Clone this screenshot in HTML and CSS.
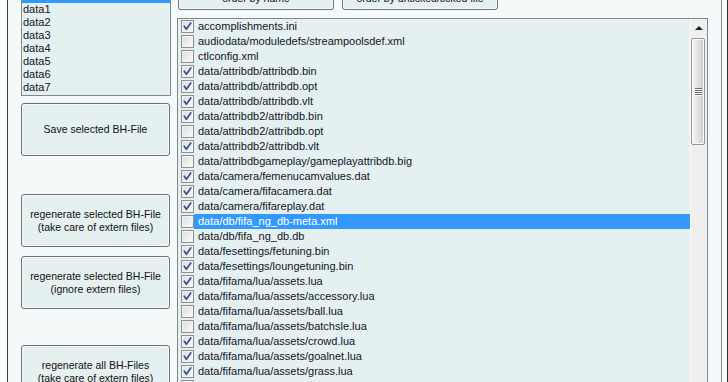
FILE: index.html
```html
<!DOCTYPE html>
<html lang="en">
<head>
  <meta charset="UTF-8">
  <title>BH-File Tool</title>
  <link rel="stylesheet" href="styles.css">
</head>
<body>
  <div class="window">
    <div class="frame-left"></div>

    <div class="side">
      <div class="bh-list">
        <div class="bh-item selected">data0</div>
        <div class="bh-item">data1</div>
        <div class="bh-item">data2</div>
        <div class="bh-item">data3</div>
        <div class="bh-item">data4</div>
        <div class="bh-item">data5</div>
        <div class="bh-item">data6</div>
        <div class="bh-item">data7</div>
      </div>
      <button class="btn btn-side btn-save">Save selected BH-File</button>
      <button class="btn btn-side btn-extern">regenerate selected BH-File<br>(take care of extern files)</button>
      <button class="btn btn-side btn-ignore">regenerate selected BH-File<br>(ignore extern files)</button>
      <button class="btn btn-side btn-all">regenerate all BH-Files<br>(take care of extern files)</button>
    </div>

    <div class="main">
      <div class="order-bar">
        <button class="btn btn-order">order by name</button>
        <button class="btn btn-order">order by unticked/ticked file</button>
      </div>

      <div class="file-list">
        <div class="file-rows" id="file-rows"></div>
        <div class="vscroll">
          <div class="arrow-up"></div>
          <div class="thumb"><span class="grip"></span></div>
        </div>
      </div>
    </div>

    <div class="frame-right"><div class="edge"></div></div>
  </div>

  <script>
    // file name, ticked
    const files = [
      ['accomplishments.ini', true],
      ['audiodata/moduledefs/streampoolsdef.xml', false],
      ['ctlconfig.xml', false],
      ['data/attribdb/attribdb.bin', true],
      ['data/attribdb/attribdb.opt', true],
      ['data/attribdb/attribdb.vlt', true],
      ['data/attribdb2/attribdb.bin', true],
      ['data/attribdb2/attribdb.opt', false],
      ['data/attribdb2/attribdb.vlt', true],
      ['data/attribdbgameplay/gameplayattribdb.big', false],
      ['data/camera/femenucamvalues.dat', true],
      ['data/camera/fifacamera.dat', true],
      ['data/camera/fifareplay.dat', true],
      ['data/db/fifa_ng_db-meta.xml', false],
      ['data/db/fifa_ng_db.db', false],
      ['data/fesettings/fetuning.bin', true],
      ['data/fesettings/loungetuning.bin', true],
      ['data/fifama/lua/assets.lua', true],
      ['data/fifama/lua/assets/accessory.lua', true],
      ['data/fifama/lua/assets/ball.lua', false],
      ['data/fifama/lua/assets/batchsle.lua', false],
      ['data/fifama/lua/assets/crowd.lua', true],
      ['data/fifama/lua/assets/goalnet.lua', true],
      ['data/fifama/lua/assets/grass.lua', true],
      ['data/fifama/lua/assets/kits.lua', true]
    ];
    const selectedIndex = 13;

    const check = '<svg width="11" height="11" viewBox="0 0 11 11"><path d="M2.3 5.2 L4.4 8.3 L8.8 2" fill="none" stroke="#34529a" stroke-width="1.7" stroke-linecap="round" stroke-linejoin="round"/></svg>';

    const rows = document.getElementById('file-rows');
    files.forEach(([name, ticked], i) => {
      const row = document.createElement('div');
      row.className = 'file-row' + (i === selectedIndex ? ' selected' : '');
      row.innerHTML = '<span class="cb">' + (ticked ? check : '') + '</span><span class="name">' + name + '</span>';
      rows.appendChild(row);
    });
  </script>
</body>
</html>
```

FILE: styles.css
```css
:root {
  --window-bg: #f4f9f9;
  --list-bg: #e5f0f0;
  --list-border: #828790;
  --select-bg: #3399ff;
  --text: #14142a;
}

* {
  box-sizing: border-box;
}

body {
  margin: 0;
  background-color: var(--window-bg);
  font-family: "Liberation Sans", Arial, sans-serif;
  color: var(--text);
  overflow: hidden;
}

.window {
  display: flex;
  width: 728px;
  height: 382px;
  overflow: hidden;
  background-color: var(--window-bg);
}

.frame-left {
  width: 8px;
  flex: none;
  background-color: #f9fcfc;
  border-right: 1px solid #3c3c3c;
}

/* left column: BH list + action buttons */
.side {
  width: 169px;
  flex: none;
  padding-left: 13px;
  display: flex;
  flex-direction: column;
}

.bh-list {
  flex: none;
  width: 150px;
  margin-top: -11px;
  padding-bottom: 1px;
  border: 1px solid var(--list-border);
  background-color: var(--list-bg);
}

.bh-item {
  height: 13px;
  line-height: 13px;
  padding-left: 1px;
  font-size: 11px;
}

.bh-item.selected {
  background-color: var(--select-bg);
  color: white;
}

.btn {
  display: block;
  flex: none;
  padding: 0;
  border: 1px solid #707070;
  border-radius: 3px;
  background-color: var(--list-bg);
  box-shadow: inset 0 0 0 1px #f6fbfb;
  font-family: "Liberation Sans", Arial, sans-serif;
  font-size: 10.5px;
  line-height: 13px;
  color: #111;
  text-align: center;
}

.btn-side {
  width: 149px;
  height: 53px;
}

.btn-save {
  margin-top: 7px;
}

.btn-extern {
  margin-top: 38px;
}

.btn-ignore {
  margin-top: 9px;
}

.btn-all {
  margin-top: 36px;
}

/* right column: order buttons + checked file list */
.main {
  width: 531px;
  flex: none;
  display: flex;
  flex-direction: column;
}

.order-bar {
  flex: none;
  display: flex;
  gap: 8px;
  height: 10px;
  padding-left: 1px;
}

.btn-order {
  width: 156px;
  height: 23px;
  margin-top: -13px;
}

.file-list {
  flex: none;
  display: flex;
  margin-top: 8px;
  height: 420px;
  border: 1px solid var(--list-border);
  background-color: var(--list-bg);
}

.file-rows {
  flex: 1;
}

.file-row {
  display: flex;
  align-items: center;
  height: 15px;
}

.cb {
  width: 13px;
  height: 13px;
  margin-left: 3px;
  flex: none;
  display: flex;
  align-items: center;
  justify-content: center;
  border: 1px solid #8e8f8f;
  background: linear-gradient(135deg, #d9dbdd 0%, #eeeeee 55%, #fafafa 100%);
  box-shadow: inset 0 0 0 1px #f4f4f4;
}

.name {
  flex: 1;
  height: 15px;
  line-height: 15px;
  padding-left: 4px;
  font-size: 11px;
  white-space: nowrap;
}

.file-row.selected .name {
  background-color: var(--select-bg);
  color: white;
}

.vscroll {
  width: 17px;
  flex: none;
  border-left: 1px solid #fbfbfb;
  background-color: #efefef;
}

.arrow-up {
  height: 19px;
  position: relative;
}

.arrow-up::after {
  content: "";
  position: absolute;
  left: 4px;
  top: 7px;
  border-left: 4px solid transparent;
  border-right: 4px solid transparent;
  border-bottom: 4px solid #222;
}

.thumb {
  width: 14px;
  height: 107px;
  border: 1px solid #979797;
  border-radius: 2px;
  background: linear-gradient(to right, #f4f4f4 0%, #e6e6e6 45%, #d2d2d2 85%, #c4c4c4 100%);
  box-shadow: inset 0 0 0 1px #fafafa;
  display: flex;
  align-items: center;
  justify-content: center;
}

.grip {
  width: 7px;
  height: 8px;
  background: repeating-linear-gradient(to bottom, #6e6e6e 0, #6e6e6e 1px, #f8f8f8 1px, #f8f8f8 2px);
}

.frame-right {
  width: 20px;
  flex: none;
  padding-left: 13px;
  display: flex;
}

.edge {
  flex: 1;
  border-left: 1px solid #8a8a8a;
  border-right: 1px solid #2e2e2e;
  background-color: #f8fcfc;
}
```
